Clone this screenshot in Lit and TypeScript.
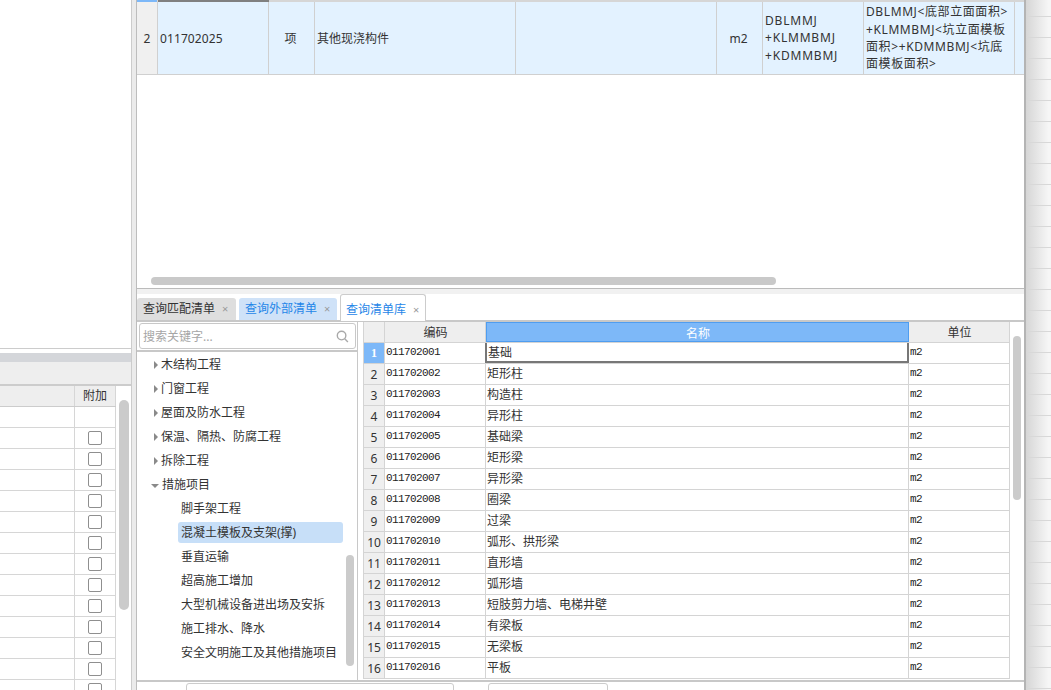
import { LitElement, css, html } from "lit";
import { customElement } from "lit/decorators.js";

const TREE = ["木结构工程", "门窗工程", "屋面及防水工程", "保温、隔热、防腐工程", "拆除工程"];
const SUB = ["脚手架工程", "混凝土模板及支架(撑)", "垂直运输", "超高施工增加", "大型机械设备进出场及安拆", "施工排水、降水", "安全文明施工及其他措施项目"];
const NAMES = ["基础", "矩形柱", "构造柱", "异形柱", "基础梁", "矩形梁", "异形梁", "圈梁", "过梁", "弧形、拱形梁", "直形墙", "弧形墙", "短肢剪力墙、电梯井壁", "有梁板", "无梁板", "平板"];

@customElement("app-root")
export class AppRoot extends LitElement {
  renderLeft() {
    return html`
      <div class="left">
        <div class="left-top"></div>
        <div class="left-bar"></div>
        <div class="left-tools"></div>
        <div class="left-body">
          <div class="left-table">
            <div class="left-row head"><span></span><span class="add">附加</span></div>
            <div class="left-row"><span></span><span></span></div>
            ${Array.from({ length: 13 }, () => html`
              <div class="left-row"><span></span><span class="check"><i></i></span></div>
            `)}
          </div>
          <div class="left-scroll"></div>
        </div>
      </div>
    `;
  }

  renderTop() {
    return html`
      <div class="top">
        <div class="top-head">
          <span class="th-blue"></span><span class="th-dark"></span><span class="th-rest"></span>
        </div>
        <div class="top-row">
          <span class="c c-no">2</span>
          <span class="c c-code">011702025</span>
          <span class="c c-unit">项</span>
          <span class="c c-name">其他现浇构件</span>
          <span class="c c-desc"></span>
          <span class="c c-unit2">m2</span>
          <span class="c c-expr">DBLMMJ<br />+KLMMBMJ<br />+KDMMBMJ</span>
          <span class="c c-full">DBLMMJ&lt;底部立面面积&gt;<br />+KLMMBMJ&lt;坑立面模板<br />面积&gt;+KDMMBMJ&lt;坑底<br />面模板面积&gt;</span>
          <span class="c c-end"></span>
        </div>
        <div class="top-empty"></div>
        <div class="hscroll"><i></i></div>
      </div>
      <div class="band"></div>
    `;
  }

  renderTabs() {
    return html`
      <div class="tabs">
        <div class="tab t1">查询匹配清单<b>×</b></div>
        <div class="tab t2">查询外部清单<b>×</b></div>
        <div class="tab t3">查询清单库<b>×</b></div>
      </div>
    `;
  }

  renderTree() {
    return html`
      <div class="tree">
        <div class="search">
          <span>搜索关键字...</span>
          <svg width="13" height="13" viewBox="0 0 14 14" fill="none" stroke="#a9a9a9" stroke-width="1.5">
            <circle cx="6" cy="6" r="4.6"></circle>
            <path d="M9.4 9.4 12.8 12.8"></path>
          </svg>
        </div>
        <div class="tree-body">
          <div class="tree-list">
            ${TREE.map((t) => html`<div class="node"><i class="arrow"></i>${t}</div>`)}
            <div class="node"><i class="arrow open"></i>措施项目</div>
            ${SUB.map((t, i) => html`<div class="leaf ${i === 1 ? "on" : ""}"><span>${t}</span></div>`)}
          </div>
          <div class="tree-track"><i></i></div>
        </div>
      </div>
    `;
  }

  renderGrid() {
    return html`
      <div class="grid-wrap">
        <div class="grid">
          <div class="g-row g-head">
            <span class="g-no"></span><span class="g-code">编码</span>
            <span class="g-name sel">名称</span><span class="g-unit">单位</span>
          </div>
          ${NAMES.map((n, i) => html`
            <div class="g-row">
              <span class="g-no ${i === 0 ? "first" : ""}">${i + 1}</span>
              <span class="g-code mono">0117020${String(i + 1).padStart(2, "0")}</span>
              <span class="g-name ${i === 0 ? "cur" : ""}">${n}</span>
              <span class="g-unit mono">m2</span>
            </div>
          `)}
        </div>
        <div class="grid-track"><i></i></div>
      </div>
    `;
  }

  render() {
    return html`
      <div class="page">
        ${this.renderLeft()}
        <div class="gutter"></div>
        <div class="main">
          ${this.renderTop()}
          ${this.renderTabs()}
          <div class="lower">
            ${this.renderTree()}
            ${this.renderGrid()}
          </div>
          <div class="foot">
            <span class="f1"></span><span class="f2"></span>
          </div>
        </div>
        <div class="strip"></div>
      </div>
    `;
  }

  static styles = css`
    :host {
      display: block;
      font-family: "Noto Sans", "Noto Sans CJK SC", sans-serif;
      font-size: 12px;
      color: #333;
    }

    .page {
      display: flex;
      width: 1051px;
      height: 690px;
      overflow: hidden;
      background: #fff;
    }

    /* left panel */
    .left {
      width: 131px;
      flex: none;
    }

    .left-top {
      height: 348px;
      border-bottom: 1px solid #ccc;
    }

    .left-bar {
      height: 9px;
      margin-top: 4px;
      background: #d4d6da;
    }

    .left-tools {
      height: 22px;
      background: #eee;
      border-bottom: 2px solid #ccc;
    }

    .left-body {
      display: flex;
    }

    .left-table {
      width: 116px;
    }

    .left-row {
      display: grid;
      grid-template-columns: 75px 41px;
      height: 21px;
      box-sizing: border-box;
      border-bottom: 1px solid #d6d6d6;
    }

    .left-row span + span {
      border-left: 1px solid #d6d6d6;
      border-right: 1px solid #d6d6d6;
      margin-left: -1px;
    }

    .left-row.head {
      background: #eee;
      line-height: 20px;
      border-bottom-color: #ccc;
    }

    .add {
      text-align: center;
    }

    .check {
      display: flex;
      align-items: center;
      justify-content: center;
    }

    .check i {
      width: 12px;
      height: 12px;
      border: 1px solid #8f8f8f;
      border-radius: 2px;
    }

    .left-scroll {
      width: 10px;
      height: 210px;
      margin: 14px 0 0 3px;
      border-radius: 5px;
      background: #cbcbcb;
    }

    .gutter {
      width: 6px;
      flex: none;
      box-sizing: border-box;
      background: #ebebeb;
      border-left: 1px solid #ccc;
      border-right: 1px solid #bdbdbd;
    }

    /* main column */
    .main {
      width: 889px;
      flex: none;
      display: flex;
      flex-direction: column;
      box-sizing: border-box;
      border-right: 2px solid #b4b4b4;
    }

    .top {
      height: 289px;
      flex: none;
      display: flex;
      flex-direction: column;
      box-sizing: border-box;
      border-bottom: 1px solid #bbb;
    }

    .band {
      height: 5px;
      flex: none;
      background: #f1f1f1;
    }

    .top-head {
      display: flex;
      height: 2px;
      flex: none;
      background: #d6d6d6;
    }

    .th-blue {
      width: 20px;
      background: #7db8f8;
    }

    .th-dark {
      width: 111px;
      background: #808080;
      margin-left: 1px;
    }

    .th-rest {
      flex: 1;
    }

    .top-row {
      display: grid;
      grid-template-columns: 21px 111px 46px 201px 201px 46px 101px 151px 1fr;
      height: 73px;
      flex: none;
      background: #e3f2ff;
      border-bottom: 1px solid #d0d0d0;
      box-sizing: border-box;
    }

    .c {
      display: flex;
      align-items: center;
      padding-left: 2px;
      border-right: 1px solid #d0d0d0;
      line-height: 17.4px;
      overflow: hidden;
      white-space: nowrap;
    }

    .c-no {
      background: #f0f0f0;
      justify-content: center;
      padding: 2px 0 0;
    }

    .c-code {
      letter-spacing: 0.1px;
      padding-top: 2px;
    }

    .c-name {
      padding-top: 2px;
    }

    .c-unit,
    .c-unit2 {
      justify-content: center;
      padding: 2px 2px 0 0;
    }

    .c-expr {
      letter-spacing: 0.8px;
    }

    .c-full {
      letter-spacing: 0.6px;
    }

    .c-end {
      border-right: 0;
    }

    .top-empty {
      flex: 1;
    }

    .hscroll {
      padding: 0 0 3px 14px;
    }

    .hscroll i {
      display: block;
      width: 625px;
      height: 8px;
      border-radius: 4px;
      background: #c9c9c9;
    }

    /* tabs */
    .tabs {
      height: 28px;
      flex: none;
      display: flex;
      align-items: flex-end;
      gap: 3px;
      box-sizing: border-box;
      border-bottom: 2px solid #c8c8c8;
    }

    .tab {
      display: flex;
      align-items: center;
      height: 22px;
      padding: 0 6px 2px;
      box-sizing: border-box;
      border-radius: 3px 3px 0 0;
      white-space: nowrap;
    }

    .tab b {
      margin-left: 7px;
      font-weight: 400;
      font-size: 11px;
      color: #9a9a9a;
    }

    .t1 {
      width: 99px;
      background: #dedede;
    }

    .t2 {
      width: 98px;
      background: #cfe2f8;
      color: #1f86e8;
    }

    .t3 {
      width: 86px;
      height: 27px;
      padding: 2px 0 0 5px;
      margin-bottom: -1px;
      background: #fff;
      color: #1f86e8;
      border: 1px solid #ccc;
      border-bottom: 0;
    }

    /* tree */
    .lower {
      height: 358px;
      flex: none;
      display: flex;
    }

    .tree {
      width: 221px;
      flex: none;
      box-sizing: border-box;
      border-right: 1px solid #c8c8c8;
    }

    .search {
      display: flex;
      align-items: center;
      justify-content: space-between;
      height: 26px;
      margin: 1px 1px 0 2px;
      padding: 0 6px 0 3px;
      box-sizing: border-box;
      border: 1px solid #c8c8c8;
      border-radius: 3px;
      color: #a6a6a6;
    }

    .tree-body {
      display: flex;
      height: 330px;
      margin-top: 1px;
      border-top: 2px solid #c8c8c8;
      box-sizing: border-box;
    }

    .tree-list {
      width: 209px;
      flex: none;
    }

    .node,
    .leaf {
      height: 24px;
      white-space: nowrap;
    }

    .node {
      line-height: 26px;
      padding-left: 24px;
    }

    .arrow {
      display: inline-block;
      width: 0;
      height: 0;
      margin: 0 3px 0 -7px;
      vertical-align: 0;
      border-style: solid;
      border-width: 4px 0 4px 4px;
      border-color: transparent transparent transparent #8a8a8a;
    }

    .arrow.open {
      margin: 0 3px 1px -10px;
      border-width: 4px 4px 0 4px;
      border-color: #8a8a8a transparent transparent transparent;
    }

    .leaf {
      box-sizing: border-box;
      padding: 2px 0 0 41px;
    }

    .leaf span {
      display: block;
      width: 165px;
      height: 21px;
      line-height: 21px;
      padding-left: 3px;
      box-sizing: border-box;
      border-radius: 3px;
    }

    .leaf.on span {
      background: #c7dff8;
    }

    .tree-track i {
      display: block;
      width: 8px;
      height: 111px;
      margin-top: 203px;
      border-radius: 4px;
      background: #cbcbcb;
    }

    /* query grid */
    .grid-wrap {
      flex: 1;
      display: flex;
      margin-left: 5px;
    }

    .grid {
      width: 647px;
      flex: none;
    }

    .g-row {
      display: grid;
      grid-template-columns: 21px 101px 423px 101px;
      height: 21px;
      box-sizing: border-box;
      border-bottom: 1px solid #d4d4d4;
      border-left: 1px solid #d4d4d4;
    }

    .g-row span {
      border-right: 1px solid #d4d4d4;
      padding-left: 1px;
      line-height: 20px;
      white-space: nowrap;
      overflow: hidden;
    }

    .g-head span {
      background: #eee;
      text-align: center;
      line-height: 22px;
    }

    .g-head .sel {
      background: #7db8f8;
      color: #fff;
      border: 1px solid #4f9df0;
    }

    .g-row .g-no {
      background: #efefef;
      text-align: center;
      padding: 1px 0 0;
      line-height: 19px;
    }

    .g-row .first {
      background: #7db8f8;
      color: #fff;
      font-weight: 700;
      font-family: "Liberation Serif", serif;
    }

    .g-row .mono {
      font-family: "Liberation Mono", monospace;
      font-size: 11px;
      letter-spacing: -0.6px;
      line-height: 18px;
      padding-left: 1px;
      color: #222;
    }

    .g-row .cur {
      border-left: 2px solid #777;
      border-right: 2px solid #777;
      border-bottom: 2px solid #777;
      margin-left: -1px;
    }

    .grid-track {
      flex: 1;
      padding-left: 3px;
    }

    .grid-track i {
      display: block;
      width: 8px;
      height: 164px;
      margin-top: 14px;
      border-radius: 4px;
      background: #cbcbcb;
    }

    .foot {
      flex: 1;
      display: flex;
      align-items: flex-start;
      padding: 1px 0 0 49px;
      border-top: 2px solid #c8c8c8;
    }

    .foot span {
      display: block;
      height: 20px;
      box-sizing: border-box;
      border: 1px solid #ccc;
      border-radius: 3px;
    }

    .f1 {
      width: 268px;
    }

    .f2 {
      width: 120px;
      margin-left: 34px;
    }

    .strip {
      flex: 1;
      background:
        repeating-linear-gradient(to bottom, #d8d8d8 0 1px, transparent 1px 21px) 0 16px,
        linear-gradient(to right, #d6d6d6, #f6f6f6 90%);
    }
  `;
}
